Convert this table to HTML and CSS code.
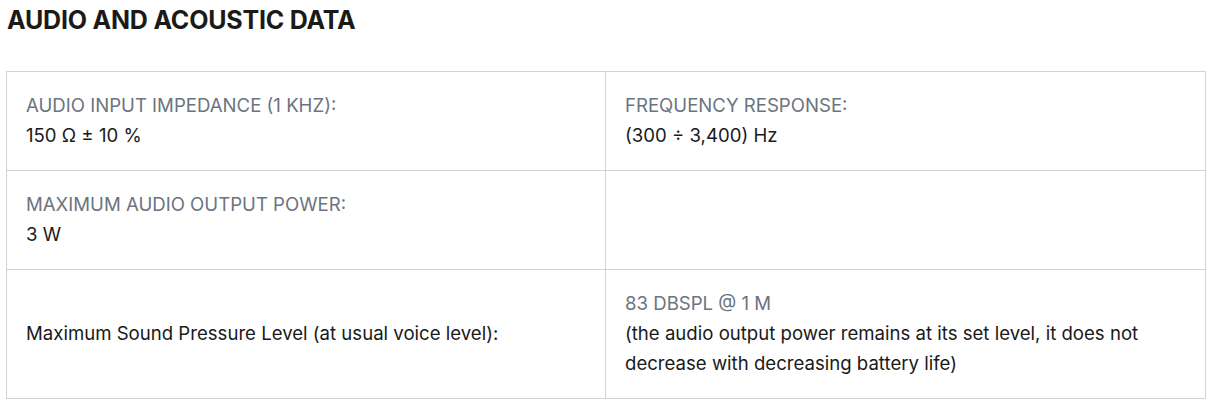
FILE: index.html
```html
<!DOCTYPE html>
<html lang="en">
<head>
<meta charset="utf-8">
<title>Audio and Acoustic Data</title>
<link rel="stylesheet" href="styles.css">
</head>
<body>
<section class="specs">
  <h2 class="specs-title">AUDIO AND ACOUSTIC DATA</h2>
  <div class="specs-grid">
    <div class="cell">
      <div class="label">AUDIO INPUT IMPEDANCE (1 KHZ):</div>
      <div class="value">150 Ω ± 10 %</div>
    </div>
    <div class="cell">
      <div class="label">FREQUENCY RESPONSE:</div>
      <div class="value">(300 ÷ 3,400) Hz</div>
    </div>
    <div class="cell">
      <div class="label">MAXIMUM AUDIO OUTPUT POWER:</div>
      <div class="value">3 W</div>
    </div>
    <div class="cell"></div>
    <div class="cell cell-center">
      <div class="value">Maximum Sound Pressure Level (at usual voice level):</div>
    </div>
    <div class="cell">
      <div class="label">83 DBSPL @ 1 M</div>
      <div class="value">(the audio output power remains at its set level, it does not decrease with decreasing battery life)</div>
    </div>
  </div>
</section>
</body>
</html>
```
FILE: styles.css
```css
html, body {
  margin: 0;
  padding: 0;
  background: #ffffff;
}
body {
  font-family: "Inter", "Liberation Sans", sans-serif;
  color: #1a1a1a;
}
.specs {
  padding: 5px 7px 0 6px;
}
.specs-title {
  margin: 0 0 36px 1px;
  font-size: 25px;
  line-height: 30px;
  font-weight: 700;
  color: #1c1a17;
  letter-spacing: -0.2px;
}
.specs-grid {
  display: grid;
  grid-template-columns: 599px 1fr;
  border-top: 1px solid #d2d2d2;
  border-left: 1px solid #d2d2d2;
}
.cell {
  border-right: 1px solid #d2d2d2;
  border-bottom: 1px solid #d2d2d2;
  padding: 18px 19px 20px 19px;
  min-height: 60px;
  font-size: 18.6px;
  line-height: 30px;
}
.cell-center {
  display: flex;
  align-items: center;
}
.label {
  color: #6b7480;
  text-transform: uppercase;
}
.value {
  color: #1a1a1a;
}
```
